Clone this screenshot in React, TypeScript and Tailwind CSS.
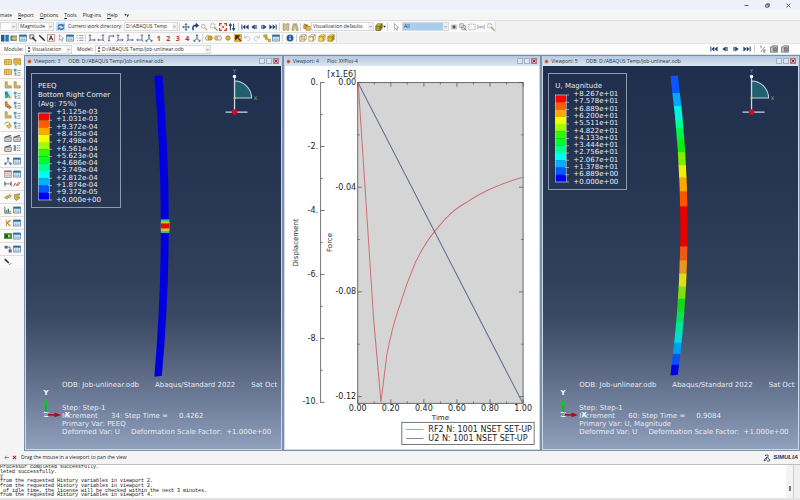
import React from "react";

type IconName =
  | "pan" | "rotate" | "zoom" | "zoomBox" | "fit" | "swap" | "first" | "prev" | "next" | "last"
  | "columns" | "persp" | "cubeGold" | "cubeGreen" | "cursor" | "refresh" | "film" | "copy" | "dashed" | "ghost"
  | "bars" | "db" | "table" | "probe" | "line" | "text" | "list" | "axisA" | "axisB" | "axisC" | "triad"
  | "spheres" | "spheresGrey" | "sphere" | "pick" | "undo" | "redo" | "tree" | "info"
  | "wire" | "cubeOpen" | "cubeLight" | "cubeFull" | "frac" | "camera" | "plotGold" | "plotGrid" | "ell"
  | "ellColor" | "ellRed" | "options" | "turn" | "animate" | "animateList" | "nodes" | "sheet" | "span" | "curve"
  | "layers" | "bolt" | "chart" | "branch" | "greenBox" | "chain" | "pencil";

const navy = "#1f416f";
const gold = "#d8a520";

function glyph(name: IconName): React.ReactNode {
  switch (name) {
    case "pan":
      return <path d="M5 0L7 2.2H5.6V4.4H7.8V3L10 5L7.8 7V5.6H5.6V7.8H7L5 10L3 7.8H4.4V5.6H2.2V7L0 5L2.2 3V4.4H4.4V2.2H3Z" fill="#3c6aa3" />;
    case "rotate":
      return <path d="M3 9C1 5 3.5 2 7.5 3M6 .8L8.6 3.2L5.8 5.2" fill="none" stroke="#223f78" strokeWidth="1.8" />;
    case "zoom":
      return <g fill="none" stroke="#9aa0a6"><circle cx="4" cy="4" r="2.3" /><path d="M6 6L9 9" stroke="#c29a78" strokeWidth="1.5" /></g>;
    case "zoomBox":
      return <g fill="none" stroke="#8b8f94"><path d="M1 1H6V6H1Z" strokeDasharray="1.5 1" /><path d="M5.5 5.5L9.5 9.5" stroke="#b07b5a" strokeWidth="1.5" /></g>;
    case "fit":
      return <g stroke="#c2452d" strokeWidth="1.6" fill="none"><path d="M.8 3.6V.8H3.6M6.4 .8H9.2V3.6M9.2 6.4V9.2H6.4M3.6 9.2H.8V6.4" /><path d="M3.5 3.5L6.5 6.5M6.5 3.5L3.5 6.5" strokeWidth="1" /></g>;
    case "swap":
      return <path d="M3 9V1.5M1.2 3.4L3 1.2L4.6 3.4M7 1V8.5M5.4 6.6L7 8.8L8.8 6.6" fill="none" stroke={navy} strokeWidth="1.3" />;
    case "first":
      return <path d="M.5 2H1.7V8H.5ZM5.4 2V8L1.9 5ZM9.5 2V8L5.6 5Z" fill={navy} />;
    case "prev":
      return <path d="M6 2V8L1.6 5ZM6.8 2.4H8.2V7.6H6.8Z" fill={navy} />;
    case "next":
      return <path d="M4 2V8L8.4 5ZM1.8 2.4H3.2V7.6H1.8Z" fill={navy} />;
    case "last":
      return <path d="M9.5 2H8.3V8H9.5ZM4.6 2V8L8.1 5ZM.5 2V8L4.4 5Z" fill={navy} />;
    case "columns":
      return <g fill="#e6cf9a" stroke="#8e7748" strokeWidth=".8"><path d="M1.5 1H4V9H1.5ZM6 1H8.5V9H6Z" /></g>;
    case "persp":
      return <g fill="#e6cf9a" stroke="#8e7748" strokeWidth=".8"><path d="M3 1H4.4L3.6 9H1ZM5.6 1H7L9 9H6.4Z" /></g>;
    case "cubeGold":
      return <g stroke="#8a5a12" strokeWidth=".7"><path d="M1 2.5H6V7H1Z" fill="#e8a32a" /><path d="M4 4.5H9V9H4Z" fill="#f5c944" /><path d="M1 1L5 3" stroke="#333" /></g>;
    case "cubeGreen":
      return <g stroke="#5a5012" strokeWidth=".8"><path d="M1 4H6.5V9.3H1Z" fill="#b89b2c" /><path d="M1 4L3 1H9L6.5 4Z" fill="#d9c050" /><path d="M9 1V6.4L6.5 9.3V4Z" fill="#8c7a1f" /></g>;
    case "cursor":
      return <path d="M3 .8V8L4.8 6.4L6 9.2L7.2 8.6L6 6H8.2Z" fill="#fff" stroke="#888" strokeWidth=".8" />;
    case "refresh":
      return <g fill="none" stroke="#2d6da3" strokeWidth="1.7"><path d="M1.2 4.6C2 1.8 6 1.4 8 3.6M8.8 5.4C8 8.2 4 8.6 2 6.4" /><path d="M8.6 1.2V4H5.8M1.4 8.8V6H4.2" strokeWidth="1.1" /></g>;
    case "film":
      return <g><path d="M1.5 2H8.5V8H1.5Z" fill="#b9bdc1" /><circle cx="5" cy="5" r="1.8" fill="#4e5358" /></g>;
    case "copy":
      return <g fill="#eee" stroke="#8b8f94" strokeWidth=".9"><path d="M1 1H6V6H1ZM3.5 3.5H8.5V8.5H3.5Z" /><path d="M6 6L9.5 9.5" stroke="#555" /></g>;
    case "dashed":
      return <path d="M1 1.5H9V8.5H1Z" fill="none" stroke="#9a9ea3" strokeDasharray="1.6 1" />;
    case "ghost":
      return <g fill="none" stroke="#a0a4a8"><path d="M1 2V8M9 2V8M1 5H9M4 3.5V6.5M6 3.5V6.5" /></g>;
    case "bars":
      return <g fill="#1f5d94"><path d="M0 1H4.4V9.5H0Z" /><path d="M5.4 1H9.8V9.5H5.4Z" fill="#2a74ae" /></g>;
    case "db":
      return <g><path d="M.5 2H8.5V8.5H.5Z" fill="#3c79a8" /><ellipse cx="5.5" cy="5.2" rx="3.4" ry="2.3" fill="#e7b443" /></g>;
    case "table":
      return <g><path d="M.5 1.2H9.5V8.8H.5Z" fill="#f2f5f8" stroke="#4b7ea3" /><path d="M.5 1.2H9.5V3.4H.5Z" fill="#2f6f9c" /><path d="M2 5H8M2 7H8" stroke="#5c9bbf" strokeWidth="1.1" strokeDasharray="1.6 .6" /></g>;
    case "probe":
      return <g fill="none" stroke="#555"><path d="M1 1H6V6H1Z" fill="#dde4ea" /><path d="M4 4L9 9.2" stroke="#1d2c3e" strokeWidth="1.7" /></g>;
    case "line":
      return <path d="M1.5 1.5L8.5 8.5" stroke="#1b2a3c" strokeWidth="1.7" />;
    case "text":
      return <g><path d="M.6 .8H9.4V9.2H.6Z" fill="#fff" stroke="#c0605a" strokeWidth=".9" /><path d="M2.6 8L5 2.2L7.4 8M3.6 6H6.4" fill="none" stroke="#2b2b35" strokeWidth="1.2" /></g>;
    case "list":
      return <path d="M1 2H2.4M4 2H9.4M1 5H2.4M4 5H9.4M1 8H2.4M4 8H9.4" stroke="#8b9094" strokeWidth="1.1" />;
    case "axisA":
      return <g fill="none" stroke="#44618c" strokeWidth="1.1"><path d="M2.5 1V7.5H9M2.5 7.5L.8 9.3M7.5 6L9 7.5L7.5 9" /><path d="M1 2.4L2.5 .8L4 2.4" stroke="#b4463c" /></g>;
    case "axisB":
      return <g fill="none" stroke="#44618c" strokeWidth="1.1"><path d="M7.5 1V7.5H1M7.5 7.5L9.2 9.3M2.5 6L1 7.5L2.5 9" /><path d="M6 2.4L7.5 .8L9 2.4" stroke="#b4463c" /></g>;
    case "axisC":
      return <g fill="none" stroke="#44618c" strokeWidth="1.1"><path d="M2.5 9V2.5H9M7.5 1L9 2.5L7.5 4" /><path d="M1 7.5L2.5 9L4 7.5" stroke="#b4463c" /></g>;
    case "triad":
      return <path d="M5 1V5.5L1.4 9M5 5.5L8.6 9M3.8 2.4L5 .9L6.2 2.4M3 9H1.2V7.2M7 9H8.8V7.2" fill="none" stroke="#2f6390" strokeWidth="1.2" />;
    case "spheres":
      return <g stroke="#8f6c1c" strokeWidth=".8"><circle cx="3.4" cy="5" r="2.8" fill="#fdf3cf" /><circle cx="6.4" cy="5" r="2.8" fill={gold} /></g>;
    case "spheresGrey":
      return <g stroke="#9c8a4a" strokeWidth=".8"><circle cx="3.4" cy="5" r="2.8" fill="#e1c462" /><circle cx="6.6" cy="5" r="2.8" fill="#e9e9e4" /></g>;
    case "sphere":
      return <circle cx="5" cy="5" r="2.8" fill="#dcb32e" stroke="#8f6c1c" strokeWidth=".8" />;
    case "pick":
      return <g><path d="M0 0H10V10H0Z" fill="#e0ad4a" /><path d="M1.5 1.5V8L8 1.5Z" fill="#3a2a12" /><path d="M3 3L8.5 8.5" stroke="#3a2a12" strokeWidth="1.3" /></g>;
    case "undo":
      return <path d="M2 1.5V5H5.4M2 5C4 1.8 8.6 2.6 8.6 6C8.6 8 7 8.8 5.5 8.8" fill="none" stroke="#c2c4c6" strokeWidth="1.2" />;
    case "redo":
      return <path d="M8 1.5V5H4.6M8 5C6 1.8 1.4 2.6 1.4 6C1.4 8 3 8.8 4.5 8.8" fill="none" stroke="#c2c4c6" strokeWidth="1.2" />;
    case "tree":
      return <g fill="#e0b63c" stroke="#97812d" strokeWidth=".7"><path d="M1 1H5V4H1ZM3 4.6H6V7H3ZM6.4 6.6H9.4V9.4H6.4Z" /></g>;
    case "info":
      return <g><circle cx="5" cy="5" r="4.4" fill="#2c5d9b" /><path d="M5 4.4V7.6M5 2.2V3.4" stroke="#fff" strokeWidth="1.3" /></g>;
    case "wire":
      return <g fill="none" stroke="#98803a" strokeWidth=".8"><path d="M1 3.5H6.5V9H1ZM3.5 1H9V6.5H3.5ZM1 3.5L3.5 1M6.5 3.5L9 1M6.5 9L9 6.5M1 9L3.5 6.5" /></g>;
    case "cubeOpen":
      return <g fill="#fbf6e4" stroke="#a08b48" strokeWidth=".8"><path d="M1 3.5H6.5V9H1ZM1 3.5L3.5 1H9L6.5 3.5ZM9 1V6.5L6.5 9V3.5Z" /></g>;
    case "cubeLight":
      return <g fill="#f8dc74" stroke="#a8861e" strokeWidth=".8"><path d="M1 3.5H6.5V9H1ZM1 3.5L3.5 1H9L6.5 3.5ZM9 1V6.5L6.5 9V3.5Z" /></g>;
    case "cubeFull":
      return <g stroke="#96701a" strokeWidth=".8"><path d="M1 3.5H6.5V9H1Z" fill="#eeb52a" /><path d="M1 3.5L3.5 1H9L6.5 3.5Z" fill="#fbd75c" /><path d="M9 1V6.5L6.5 9V3.5Z" fill="#c88d17" /></g>;
    case "frac":
      return <path d="M2.6 1V4M1.6 1.6L2.6 1M2.4 8.6L7.4 2M5.6 6H7.8V7.4H5.8V9H8" fill="none" stroke="#6a6f75" strokeWidth=".9" />;
    case "camera":
      return <g stroke="#5c6166" strokeWidth=".9"><path d="M.6 2.6H2.6L3.2 1H9.4V9H.6Z" fill="#c9ccd0" /><path d="M4 3.4H8V7.4H4Z" fill="#8a9097" /></g>;
    case "plotGold":
      return <g stroke="#a6801c" strokeWidth=".9" fill="#f2d983"><path d="M.6 2H9.4V8H.6Z" /><path d="M3 .8V9.2M6 .8V9.2M.6 5H9.4" stroke="#d39b28" /></g>;
    case "plotGrid":
      return <g><path d="M1 1H9.5V8.5L6 7L4 9.5L1 7Z" fill="#ecc347" stroke="#98781b" strokeWidth=".8" /><path d="M3 3H8M3 5.4H8" stroke="#a98924" strokeDasharray="1.4 .8" /></g>;
    case "ell":
      return <path d="M1.5 1H4V6H9V8.8H1.5Z" fill="#d9bd63" stroke="#95813d" strokeWidth=".8" />;
    case "ellColor":
      return <g><path d="M0 0H10V10H0Z" fill="#d8ebf6" /><path d="M1.5 1H4L8.8 8.8H1.5Z" fill="#35a877" /><path d="M1.5 1H4V4L1.5 5Z" fill="#2b6fd0" /><path d="M5.4 6.6L8.8 8.8H4Z" fill="#e3c22e" /></g>;
    case "ellRed":
      return <g><path d="M1.5 1H4V5L9 8L7 9.4L2 7Z" fill="#d98d3a" stroke="#9a5a2b" strokeWidth=".8" /><path d="M5 4L9 8" stroke="#b3402f" /></g>;
    case "options":
      return <g><path d="M1 1H4.4V4.4H1Z" fill="#4d9ca6" /><path d="M2.6 5V9H4.6M2.6 7H4.6" fill="none" stroke="#55656f" strokeWidth=".9" /><path d="M5.6 3H9.6M5.6 6H9.6M5.6 9H9.6" stroke="#7d8b94" strokeWidth="1.1" /></g>;
    case "turn":
      return <g fill="none"><path d="M1 4C2 0 8 1 7.4 5" stroke="#8b7a45" strokeWidth="1.1" /><path d="M3 6L6 9.2L9.2 6.6L7.4 4.4Z" fill="#efcb50" stroke="#98781b" strokeWidth=".8" /></g>;
    case "animate":
      return <g><path d="M1 4H9V9.2H1Z" fill="#dfe3e6" stroke="#5e666d" /><path d="M1 3.4L8.4 .8L9 2.4L1.8 4.6Z" fill="#565e66" /><path d="M3 6.6H7" stroke="#b87c5c" /></g>;
    case "animateList":
      return <g><path d="M.8 1.4H4V8.8H.8Z" fill="#8a9299" /><path d="M5 2H9.6M5 5H9.6M5 8H9.6" stroke="#4c86b4" strokeWidth="1.2" strokeDasharray="1.5 .6" /></g>;
    case "nodes":
      return <g stroke="#3473a0" strokeWidth="1"><path d="M5 2V5.4L2 8.4M5 5.4L8 8.4" fill="none" /><circle cx="5" cy="1.8" r="1" fill="#3473a0" /><circle cx="1.8" cy="8.4" r="1" fill="#3473a0" /><circle cx="8.2" cy="8.4" r="1" fill="#3473a0" /></g>;
    case "sheet":
      return <g><path d="M.8 1H9.2V9.2H.8Z" fill="#f3f1ef" stroke="#8b7d82" strokeWidth=".9" /><path d="M.8 1H9.2V2.8H.8Z" fill="#a8707b" /><path d="M.8 5H9.2M4 2.8V9.2M6.6 2.8V9.2M.8 7H9.2" stroke="#b5abae" strokeWidth=".7" /></g>;
    case "span":
      return <path d="M1 1.5V8M9 1.5V8M1 4.8H9M2.6 3.2L1 4.8L2.6 6.4M7.4 3.2L9 4.8L7.4 6.4" fill="none" stroke="#555a60" strokeWidth=".9" />;
    case "curve":
      return <path d="M.6 8L2.8 4L4.6 7L7 2.6M5.6 7.4L9.4 2.4" fill="none" stroke="#b84a43" strokeWidth="1.1" />;
    case "layers":
      return <g stroke="#867628" strokeWidth=".7"><path d="M.8 6L3 3.6L6 4.8L4 7.6Z" fill="#c7c14a" /><path d="M4 4.4L6.4 2L9.4 3L7.2 6Z" fill="#e8c53d" /></g>;
    case "bolt":
      return <g stroke="#867628" strokeWidth=".8"><path d="M2 2L8.4 1L7 4.6L8.8 6L4 9.4L1.6 6.6Z" fill="#d8b94a" /><path d="M4 3L6 7" stroke="#7d7d70" /></g>;
    case "chart":
      return <g><path d="M1 1V9H9.4" fill="none" stroke="#47604e" /><path d="M2 5H4V8.4H2Z" fill="#3a9b4c" /><path d="M4.6 3.4H6.2V8.4H4.6Z" fill="#2f6f9c" /><path d="M6.8 5.6H8.8V8.4H6.8Z" fill="#c7b04a" /></g>;
    case "branch":
      return <g fill="none" strokeWidth="1.3"><path d="M3 1V9" stroke="#c9a437" /><path d="M4 5L8 1.4M4 5L8 9" stroke="#bd5b3c" /></g>;
    case "greenBox":
      return <g><path d="M0 1.4H10V8.6H0Z" fill="#3c8f4a" /><path d="M1.4 3.4H5V7H1.4Z" fill="#234e2c" /><path d="M5 3L8.8 5L5 7Z" fill="#cfdc5a" /></g>;
    case "chain":
      return <g fill="#4e6380"><path d="M.8 1H4.6V4.4H.8Z" /><path d="M5.8 5.6H9.6V9.4H5.8Z" /><path d="M4.6 2.6H7.6V6" fill="none" stroke="#4e6380" strokeWidth="1.1" /></g>;
    case "pencil":
      return <g fill="none"><path d="M1 1.4L6 6.2" stroke="#23282e" strokeWidth="1.8" /><path d="M6 8.6L9.4 6.4" stroke="#8a9a4a" strokeWidth="1.2" /></g>;
  }
}

function Tool({ name }: { name: IconName }) {
  return (
    <button type="button" aria-label={name} className="flex h-[9px] w-[9px] shrink-0 items-center justify-center">
      <svg viewBox="0 0 10 10" className="h-2 w-2">{glyph(name)}</svg>
    </button>
  );
}

function Group({ names, className }: { names: IconName[]; className: string }) {
  return (
    <div className={"flex shrink-0 items-center justify-between " + className}>
      {names.map((n, i) => <Tool key={i} name={n} />)}
    </div>
  );
}

function Divider() {
  return <span className="mx-px h-2 w-px shrink-0 bg-[#d3d3d3]" />;
}

function Combo({ label, value, className, spin, active }: { label: string; value: string; className: string; spin?: boolean; active?: boolean }) {
  return (
    <div className={"relative flex h-[9px] shrink-0 items-center border border-[#d9d9d9] " + (active ? "bg-[#a8cdf0] text-[#1b3a5c] " : "bg-white ") + className}>
      {spin && (
        <svg viewBox="0 0 4 8" className="ml-px h-[7px] w-1 shrink-0"><path d="M2 .5L3.6 3H.4ZM2 7.5L3.6 5H.4Z" fill="#333" /></svg>
      )}
      <select aria-label={label} defaultValue={value} className="h-full w-full min-w-0 appearance-none bg-transparent pl-px leading-[7px] outline-none">
        <option>{value}</option>
      </select>
      <span className="pointer-events-none absolute inset-y-0 right-0 flex w-[5px] items-center justify-center bg-[#f1f1f1]">
        <svg viewBox="0 0 6 6" className="h-[3px] w-[3px]"><path d="M.5 1.5L3 4.5L5.5 1.5" fill="none" stroke="#666" strokeWidth="1.2" /></svg>
      </span>
    </div>
  );
}

const spectrum = [
  "#ff0000", "#ff5d00", "#ffa800", "#f4ff00", "#9dff00", "#2bff00",
  "#00ff2b", "#00ff8f", "#00fff0", "#00b0ff", "#0058ff", "#0000ff",
];

function Legend({ title, values, className }: { title: string[]; values: string[]; className: string }) {
  return (
    <div className={"absolute left-[5px] top-[7px] border border-[#8d9aad] pb-[3px] pl-1.5 pt-2 " + className}>
      {title.map((t) => <p key={t} className="-mr-4 leading-[9px]">{t}</p>)}
      <div className="flex gap-1">
        <svg viewBox="0 0 14 95" className="h-[95px] w-[14px] shrink-0">
          {spectrum.map((c, i) => <rect key={c} x="0" y={4 + i * 7.25} width="11" height="7.3" fill={c} />)}
          <path d="M.5 4V91M11.5 4V91" stroke="#c3ccd8" strokeWidth=".6" />
          {values.map((v, i) => <path key={v} d={`M${i === 0 || i === 12 ? 0 : 10} ${4 + i * 7.25}H14`} stroke="#c3ccd8" strokeWidth=".7" />)}
        </svg>
        <ul className="grid h-[95px] auto-rows-fr">
          {values.map((v) => <li key={v} className="leading-[7px]">{v}</li>)}
        </ul>
      </div>
    </div>
  );
}

function Triads() {
  return (
    <g>
      <path d="M234 81A17 17 0 0 1 251 98H234Z" fill="#21606f" stroke="#c4d6e6" strokeWidth="1" />
      <path d="M234 77V112M225 112H247" stroke="#c9d6e6" strokeWidth="1.3" />
      <circle cx="234" cy="76.5" r="1.7" fill="#fff" />
      <circle cx="234" cy="112" r="2.8" fill="#d00a20" />
      <circle cx="234" cy="98" r="1" fill="#d8d84a" />
      <text x="234" y="73" textAnchor="middle" fontSize="5" fill="#8d99a8">Y</text>
      <text x="255" y="100" textAnchor="middle" fontSize="5" fill="#a8a878">X</text>
      <path d="M46 412V403" stroke="#14b524" strokeWidth="2.2" />
      <path d="M46 398L48.6 404.5H43.4Z" fill="#14c624" />
      <path d="M48 414H56" stroke="#a01515" strokeWidth="1.6" />
      <path d="M61 414L54.5 416.4V411.6Z" fill="#a80f10" />
      <g fontWeight="bold" fill="#fff" textAnchor="middle" fontSize="7">
        <text x="46" y="394">Y</text>
        <text x="46" y="416">Z</text>
        <text x="67" y="416">X</text>
      </g>
      <path d="M44.5 415.5L47.5 411.5" stroke="#1830c0" strokeWidth=".8" />
    </g>
  );
}

function Scene({ children }: { children: React.ReactNode }) {
  return (
    <svg viewBox="26 66 254 382" preserveAspectRatio="xMinYMin meet" className="absolute inset-0 h-full w-full">
      {children}
      <Triads />
    </svg>
  );
}

function StateText({ increment, time, variable }: { increment: string; time: string; variable: string }) {
  return (
    <div className="absolute bottom-[13px] left-9 whitespace-pre leading-[8px]">
      <p className="mb-[15px] flex gap-4">
        <span>ODB: Job-unlinear.odb</span>
        <span>Abaqus/Standard 2022</span>
        <span>Sat Oct</span>
      </p>
      <p>Step: Step-1</p>
      <p>{`Increment      ${increment}: Step Time =     ${time}`}</p>
      <p>{`Primary Var: ${variable}`}</p>
      <p>{"Deformed Var: U     Deformation Scale Factor:  +1.000e+00"}</p>
    </div>
  );
}

function Viewport({ name, source, canvas, children }: { name: string; source: string; canvas: string; children: React.ReactNode }) {
  return (
    <section className="flex min-w-0 flex-col border border-[#7b91a8] bg-[#cbd9e8] px-px pb-px">
      <header className="flex h-[10px] shrink-0 items-center bg-gradient-to-b from-[#b4c9e1] to-[#dbe6f1] pl-px text-[#2d3640]">
        <svg viewBox="0 0 6 6" className="mr-0.5 h-[5px] w-[5px]"><circle cx="3" cy="3" r="2.3" fill="#e2724a" /><circle cx="3" cy="3" r="1" fill="#9a2f25" /></svg>
        <h2 className="whitespace-nowrap">{name}</h2>
        <span className="ml-2 whitespace-nowrap">{source}</span>
        <span className="ml-auto flex gap-px pr-0.5">
          <button type="button" aria-label="Minimize" className="h-[6px] w-[6px] border border-[#a3b1c1] bg-[#dce5ee]" />
          <button type="button" aria-label="Maximize" className="h-[6px] w-[6px] border border-[#a3b1c1] bg-[#dce5ee]" />
          <button type="button" aria-label="Close" className="flex h-[6px] w-[6px] items-center justify-center border border-[#b07a84] bg-[#dfa9a9]">
            <svg viewBox="0 0 4 4" className="h-1 w-1"><path d="M.5 .5L3.5 3.5M3.5 .5L.5 3.5" stroke="#8a343c" /></svg>
          </button>
        </span>
      </header>
      <div className={"relative flex-1 overflow-hidden font-['DejaVu_Sans',sans-serif] text-[7px] " + canvas}>{children}</div>
    </section>
  );
}

const sceneCanvas =
  "bg-[linear-gradient(to_bottom,#1f2e4c_0%,#263652_30%,#30405b_55%,#3a4964_66%,#5b6984_80%,#74839f_90%,#909fbc_100%)] text-[#e6ebf2]";

const magnitudeBands: [number, string][] = [
  [76, "#0a55ff"], [93, "#00a8ff"], [106, "#00f5e0"], [119, "#00ff98"], [128, "#00f548"], [139, "#10ea10"], [152, "#7dee00"],
  [165, "#eef000"], [177, "#ffa800"], [191, "#fb5500"], [206, "#e60000"], [246, "#ee5a10"], [260, "#e8961c"],
  [273, "#e0e010"], [286, "#7fe010"], [298, "#14d81c"], [311, "#0ce050"], [321, "#00e69a"], [332, "#00dcd8"],
  [342, "#00a0f0"], [353, "#0a50f5"], [364, "#0000e0"],
];

const strainBeam = "M154 76Q167 226 154 376L161.500 375Q175 226 162 75.500Z";
const magnitudeBeam = "M153 76Q173 226 153 375L160.500 374Q180 226 160.500 75.500Z";

const forceTicks = ["0.00", "", "-0.04", "", "-0.08", "", "-0.12"];
const timeTicks = ["0.00", "0.20", "0.40", "0.60", "0.80", "1.00"];

function XYPlot() {
  return (
    <svg viewBox="285 66 254 382" preserveAspectRatio="xMinYMin meet" className="absolute inset-0 h-full w-full" fontSize="8" fill="#1c1c1c">
      <rect x="357.500" y="82.500" width="165" height="320" fill="#d5d5d5" stroke="#6a6a70" />
      <g stroke="#55555c" strokeWidth=".8" fill="none">
        {Array.from({ length: 11 }, (_, i) => {
          const x = 357.5 + i * 16.5;
          const l = i % 2 ? 2 : 4;
          return <path key={i} d={`M${x} 82.500v${l}M${x} 402.500v${-l}`} />;
        })}
        {forceTicks.map((t, i) => {
          const y = 82.5 + i * 52.2;
          const l = t ? 4 : 2;
          return <path key={i} d={`M357.500 ${y}h${l}M522.500 ${y}h${-l}`} />;
        })}
        <path d="M320.500 82V402" />
        {Array.from({ length: 11 }, (_, i) => <path key={i} d={`M320.500 ${82.5 + i * 31.9}h${i % 2 ? 2 : 4}`} />)}
      </g>
      <g textAnchor="end">
        <text x="356" y="77">[x1.E6]</text>
        {forceTicks.map((t, i) => t && <text key={i} x="356" y={85 + i * 52.2}>{t}</text>)}
        {["0.", "-2.", "-4.", "-6.", "-8.", "-10."].map((t, i) => <text key={t} x="318" y={85 + i * 63.7}>{t}</text>)}
      </g>
      <g textAnchor="middle">
        {timeTicks.map((t, i) => <text key={t} x={357.5 + i * 33} y="410.500">{t}</text>)}
        <g fontSize="7">
          <text x="440" y="419">Time</text>
          <text transform="translate(298 242) rotate(-90)">Displacement</text>
          <text transform="translate(332 242) rotate(-90)">Force</text>
        </g>
      </g>
      <path
        d="M358 83L368.300 240L373.500 320L380.700 401L383.700 377L386.700 353C390 337 393 324 396.700 313L406.700 283L415 262C424 244 429 237 434.300 231C440 224 444 219 446.700 216.700C452 211 459 206 466.700 201.700C473 197 481 193 489 189C498 185 511 180 522.300 177"
        fill="none" stroke="#cf6e72" strokeWidth="1" />
      <path d="M358 83L522 402" fill="none" stroke="#62698c" strokeWidth="1" />
      <rect x="401.500" y="421.500" width="132" height="22" fill="#fff" stroke="#77777c" />
      <path d="M406 428.500H423" stroke="#dc8a8c" />
      <path d="M406 437.500H423" stroke="#85889c" />
      <text x="428" y="431">RF2 N: 1001 NSET SET-UP</text>
      <text x="428" y="440">U2 N: 1001 NSET SET-UP</text>
    </svg>
  );
}

const toolbox: [IconName, IconName | null][][] = [
  [["plotGold", "plotGrid"], ["plotGold", "options"]],
  [["ell", "ell"], ["ellColor", "options"], ["ellRed", "options"], ["ell", "options"], ["turn", "options"]],
  [["animate", "animate"], ["animate", "animateList"]],
  [["nodes", "table"]],
  [["sheet", "table"], ["span", "curve"]],
  [["layers", "bolt"]],
  [["chart", "table"]],
  [["branch", "table"]],
  [["greenBox", "table"]],
  [["chain", "table"]],
  [["pencil", null]],
];

const messages = [
  "Processor completed successfully.",
  "leted successfully.",
  "y",
  "from the requested History variables in viewport 2.",
  "from the requested History variables in viewport 2.",
  " of idle time, the license will be checked within the next 3 minutes.",
  "from the requested History variables in viewport 4.",
];

export default function App() {
  return (
    <div className="flex h-screen min-h-[500px] flex-col overflow-hidden bg-[#f3f3f3] font-['Open_Sans','Noto_Sans',sans-serif] text-[5px] leading-[7px] text-[#2b2b2b]">
      <div className="flex h-[10px] shrink-0 items-center justify-end gap-[13px] bg-[#eef0fa] pr-2">
        {[
          ["Minimize", "M1 5H9"],
          ["Restore", "M1.500 3.500H6.500V8.500H1.500ZM3.500 3.500V1.500H8.500V6.500H6.500"],
          ["Close", "M1 1L9 9M9 1L1 9"],
        ].map(([label, d]) => (
          <button key={label} type="button" aria-label={label} className="flex h-2 w-2 items-center justify-center">
            <svg viewBox="0 0 10 10" className="h-[5px] w-[5px]"><path d={d} fill="none" stroke="#333" strokeWidth="1.5" /></svg>
          </button>
        ))}
      </div>

      <nav className="flex h-[11px] shrink-0 items-center gap-1.5 border-b border-[#dedede] bg-[#f5f5f6] text-[#222]">
        <button type="button">mate</button>
        <button type="button"><u>R</u>eport</button>
        <button type="button"><u>O</u>ptions</button>
        <button type="button"><u>T</u>ools</button>
        <button type="button">Plu<u>g</u>-ins</button>
        <button type="button"><u>H</u>elp</button>
        <button type="button" aria-label="Context help">
          <svg viewBox="0 0 10 10" className="h-[5px] w-[5px]"><path d="M1 1L6 3L3.500 4.500L3 7ZM6 5L9 1.500V5L6.500 9" fill="#222" /></svg>
        </button>
      </nav>

      <div className="flex h-[11px] shrink-0 items-center bg-[#f1f1f1]">
        <div className="flex h-full items-center border-r border-[#dedede] bg-[#fafafa]">
          <Combo label="Output type" value="" className="mr-px w-[17px]" />
          <Combo label="Component" value="Magnitude" className="mr-0.5 w-9" />
          <span className="mr-[3px] bg-[#cfe3f6]"><Tool name="refresh" /></span>
          <span className="w-14 shrink-0 whitespace-nowrap">Current work directory:</span>
          <Combo label="Current work directory" value="D:\ABAQUS Temp" className="w-[54px]" />
          <Divider />
          <Group names={["pan", "rotate", "zoom", "zoomBox", "fit", "swap"]} className="w-14" />
          <Divider />
          <Group names={["first", "prev", "next", "last"]} className="w-[38px]" />
          <Divider />
          <Group names={["columns", "persp"]} className="w-[18px]" />
          <Divider />
          <Tool name="cubeGold" />
          <Combo label="Color coding" value="Visualization defaults" className="w-[63px]" />
          <Tool name="cubeGreen" />
          <svg viewBox="0 0 4 4" className="h-[3px] w-[3px]"><path d="M0 1H4L2 3.500Z" fill="#333" /></svg>
          <Divider />
          <span className="mx-0.5"><Tool name="cursor" /></span>
          <Combo label="Selection filter" value="All" active className="w-[47px]" />
          <Group names={["film", "copy", "dashed", "ghost", "zoomBox"]} className="w-[46px]" />
        </div>
      </div>

      <div className="flex h-[11px] shrink-0 items-center bg-[#f1f1f1]">
        <div className="flex h-full items-center border-r border-t border-[#dedede] bg-[#fafafa]">
          <Group names={["bars", "db", "table", "probe", "line", "text", "cursor", "table", "list"]} className="w-[84px]" />
          <Divider />
          <Group names={["axisA", "axisB", "axisC", "axisA", "axisA", "axisB", "triad"]} className="w-[67px]" />
          <div className="flex w-[38px] text-[7px] font-bold text-[#c03024]">
            {["1", "2", "3", "4"].map((n) => <button key={n} type="button" className="flex-1">{n}</button>)}
          </div>
          <Tool name="triad" />
          <Divider />
          <Group names={["spheres", "spheresGrey", "sphere", "pick", "undo", "redo", "tree", "table"]} className="w-[77px]" />
          <Divider />
          <div className="mx-px flex"><Tool name="info" /></div>
          <Divider />
          <Group names={["wire", "cubeOpen", "cubeLight", "cubeFull"]} className="w-[38px]" />
        </div>
      </div>

      <div className="flex h-3 shrink-0 items-center border-y border-[#e4e4e4] bg-[#fdfdfd] pl-1">
        <span className="w-[21px] shrink-0">Module:</span>
        <Combo label="Module" value="Visualization" spin className="w-[47px]" />
        <span className="ml-[5px] w-[18px] shrink-0">Model:</span>
        <Combo label="Model" value="D:/ABAQUS Temp/Job-unlinear.odb" spin className="w-[116px]" />
        <div className="ml-auto flex items-center gap-0.5 pr-[11px]">
          <Tool name="first" /><Tool name="prev" /><Tool name="next" /><Tool name="last" />
          <Divider />
          <Tool name="frac" /><Tool name="camera" /><Tool name="camera" />
        </div>
      </div>

      <main className="grid min-h-0 flex-1 grid-cols-[24px_1fr_1fr_1fr]">
        <aside className="flex flex-col bg-[#f4f4f4] pt-px">
          {toolbox.map((rows, i) => (
            <div key={i} className="border-b border-[#ead9cf] bg-[#fafafa] px-[3px] py-px last:border-0">
              {rows.map(([a, b], j) => (
                <div key={j} className="flex h-[10px] items-center justify-between">
                  <Tool name={a} />
                  {b && <Tool name={b} />}
                </div>
              ))}
            </div>
          ))}
        </aside>

        <Viewport name="Viewport: 3" source="ODB: D:/ABAQUS Temp/Job-unlinear.odb" canvas={sceneCanvas}>
          <Scene>
            <path d={strainBeam} fill="#0000de" />
            <rect x="160.500" y="219" width="8.500" height="13.500" fill="#2fc890" />
            <rect x="160.500" y="221" width="8.500" height="9.500" fill="#d8c020" />
            <rect x="160.500" y="223" width="8.500" height="5" fill="#e00808" />
          </Scene>
          <Legend
            className="pr-[19px]"
            title={["PEEQ", "Bottom Right Corner", "(Avg: 75%)"]}
            values={["+1.125e-03", "+1.031e-03", "+9.372e-04", "+8.435e-04", "+7.498e-04", "+6.561e-04", "+5.623e-04", "+4.686e-04", "+3.749e-04", "+2.812e-04", "+1.874e-04", "+9.372e-05", "+0.000e+00"]}
          />
          <StateText increment="34" time="0.4262" variable="PEEQ" />
        </Viewport>

        <Viewport name="Viewport: 4" source="Plot: XYPlot-4" canvas="bg-white">
          <XYPlot />
        </Viewport>

        <Viewport name="Viewport: 5" source="ODB: D:/ABAQUS Temp/Job-unlinear.odb" canvas={sceneCanvas}>
          <Scene>
            <clipPath id="beam"><path d={magnitudeBeam} /></clipPath>
            <g clipPath="url(#beam)">
              {magnitudeBands.map(([y, c], i) => {
                const end = magnitudeBands[i + 1]?.[0] ?? 377;
                return <rect key={y} x="150" y={i ? y : 75} width="24" height={end - y + 1} fill={c} />;
              })}
            </g>
          </Scene>
          <Legend
            className="pr-2"
            title={["U, Magnitude"]}
            values={["+8.267e+01", "+7.578e+01", "+6.889e+01", "+6.200e+01", "+5.511e+01", "+4.822e+01", "+4.133e+01", "+3.444e+01", "+2.756e+01", "+2.067e+01", "+1.378e+01", "+6.889e+00", "+0.000e+00"]}
          />
          <StateText increment="60" time="0.9084" variable="U, Magnitude" />
        </Viewport>
      </main>

      <div className="flex h-[13px] shrink-0 items-center bg-[#f5f4f4] pl-1 pr-0.5">
        <button type="button" aria-label="Previous"><svg viewBox="0 0 6 6" className="h-[5px] w-[5px]"><path d="M6 3H1M3 1L1 3L3 5" fill="none" stroke="#666" strokeWidth=".9" /></svg></button>
        <button type="button" aria-label="Cancel" className="ml-[3px] mr-1"><svg viewBox="0 0 6 6" className="h-[5px] w-[5px]"><path d="M1 1L5 5M5 1L1 5" stroke="#c02a35" strokeWidth="1.3" /></svg></button>
        <p className="whitespace-nowrap">Drag the mouse in a viewport to pan the view</p>
        <div className="ml-auto flex items-center gap-0.5 text-[#273258]">
          <svg viewBox="0 0 10 10" className="h-2 w-2"><path d="M2.500 2C5 .5 7.500 1.500 6.500 3C6 4 4.500 4.500 4 4.500M4.500 4.500C1 7 .5 8.500 2 8.500C3.500 8.500 4.500 6 4.500 4.500M6.500 4.500C5.500 6.500 9.500 6.500 8.500 8C8 9 6 9 5 8.500" fill="none" stroke="currentColor" strokeWidth="1.2" /></svg>
          <span className="font-['Liberation_Sans',sans-serif] text-[6px] font-bold italic">SIMULIA</span>
        </div>
      </div>

      <footer className="flex shrink-0 border-b-2 border-t border-b-[#e3e3e3] border-t-[#bdbdbd] bg-[#f0f0f0] pr-1.5">
        <ol className="grid h-[33px] flex-1 auto-rows-fr overflow-hidden whitespace-pre bg-white font-['Liberation_Mono',monospace] leading-[5px] text-[#111]">
          {messages.map((m, i) => <li key={i}>{m}</li>)}
        </ol>
        <div className="flex w-2 flex-col justify-end border-r border-[#d0d0d0] bg-[#f3f3f3] pb-[7px]">
          <span className="mx-auto h-[5px] w-0.5 bg-[#77777a]" />
        </div>
      </footer>
    </div>
  );
}
